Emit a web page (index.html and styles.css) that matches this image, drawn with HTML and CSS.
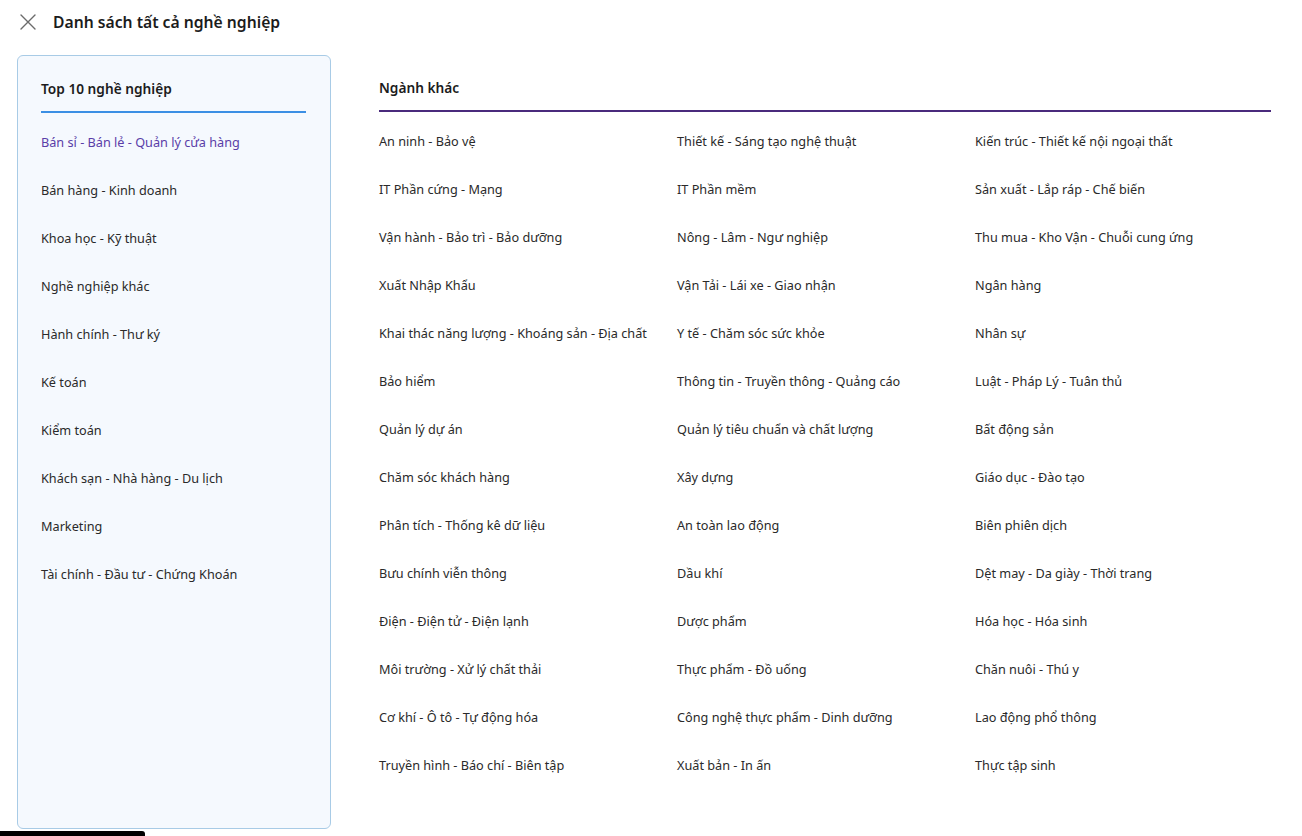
FILE: index.html
```html
<!DOCTYPE html>
<html lang="vi">
<head>
<meta charset="utf-8">
<title>Danh sách tất cả nghề nghiệp</title>
<link rel="stylesheet" href="styles.css">
</head>
<body>
<header class="topbar">
  <svg class="close-icon" width="18" height="18" viewBox="0 0 18 18" aria-hidden="true"><path d="M2 2 L16 16 M16 2 L2 16" stroke="#6b6b6b" stroke-width="1.4" fill="none" stroke-linecap="round"/></svg>
  <h1 class="title">Danh sách tất cả nghề nghiệp</h1>
</header>
<main class="layout">
  <aside class="sidebar">
    <h2 class="side-heading">Top 10 nghề nghiệp</h2>
    <ul class="side-list">
      <li class="side-item active">Bán sỉ - Bán lẻ - Quản lý cửa hàng</li>
      <li class="side-item">Bán hàng - Kinh doanh</li>
      <li class="side-item">Khoa học - Kỹ thuật</li>
      <li class="side-item">Nghề nghiệp khác</li>
      <li class="side-item">Hành chính - Thư ký</li>
      <li class="side-item">Kế toán</li>
      <li class="side-item">Kiểm toán</li>
      <li class="side-item">Khách sạn - Nhà hàng - Du lịch</li>
      <li class="side-item">Marketing</li>
      <li class="side-item">Tài chính - Đầu tư - Chứng Khoán</li>
    </ul>
  </aside>
  <section class="content">
    <h2 class="content-heading">Ngành khác</h2>
    <ul class="grid">
      <li>An ninh - Bảo vệ</li>
      <li>Thiết kế - Sáng tạo nghệ thuật</li>
      <li>Kiến trúc - Thiết kế nội ngoại thất</li>
      <li>IT Phần cứng - Mạng</li>
      <li>IT Phần mềm</li>
      <li>Sản xuất - Lắp ráp - Chế biến</li>
      <li>Vận hành - Bảo trì - Bảo dưỡng</li>
      <li>Nông - Lâm - Ngư nghiệp</li>
      <li>Thu mua - Kho Vận - Chuỗi cung ứng</li>
      <li>Xuất Nhập Khẩu</li>
      <li>Vận Tải - Lái xe - Giao nhận</li>
      <li>Ngân hàng</li>
      <li>Khai thác năng lượng - Khoáng sản - Địa chất</li>
      <li>Y tế - Chăm sóc sức khỏe</li>
      <li>Nhân sự</li>
      <li>Bảo hiểm</li>
      <li>Thông tin - Truyền thông - Quảng cáo</li>
      <li>Luật - Pháp Lý - Tuân thủ</li>
      <li>Quản lý dự án</li>
      <li>Quản lý tiêu chuẩn và chất lượng</li>
      <li>Bất động sản</li>
      <li>Chăm sóc khách hàng</li>
      <li>Xây dựng</li>
      <li>Giáo dục - Đào tạo</li>
      <li>Phân tích - Thống kê dữ liệu</li>
      <li>An toàn lao động</li>
      <li>Biên phiên dịch</li>
      <li>Bưu chính viễn thông</li>
      <li>Dầu khí</li>
      <li>Dệt may - Da giày - Thời trang</li>
      <li>Điện - Điện tử - Điện lạnh</li>
      <li>Dược phẩm</li>
      <li>Hóa học - Hóa sinh</li>
      <li>Môi trường - Xử lý chất thải</li>
      <li>Thực phẩm - Đồ uống</li>
      <li>Chăn nuôi - Thú y</li>
      <li>Cơ khí - Ô tô - Tự động hóa</li>
      <li>Công nghệ thực phẩm - Dinh dưỡng</li>
      <li>Lao động phổ thông</li>
      <li>Truyền hình - Báo chí - Biên tập</li>
      <li>Xuất bản - In ấn</li>
      <li>Thực tập sinh</li>
    </ul>
  </section>
</main>
<div class="bottom-bar"></div>
</body>
</html>
```

FILE: styles.css
```css
* { box-sizing: border-box; }
html, body { margin: 0; padding: 0; }
body {
  font-family: "Noto Sans", "Open Sans", sans-serif;
  color: #222;
  background: #fff;
  width: 1302px;
  height: 836px;
  overflow: hidden;
  position: relative;
}
ul { list-style: none; margin: 0; padding: 0; }
h1, h2 { margin: 0; }

.topbar {
  display: flex;
  align-items: center;
  height: 44px;
  padding-left: 19px;
  gap: 16px;
}
.close-icon { display: block; }
.title {
  font-size: 15.7px;
  font-weight: 600;
  color: #1c1c1c;
  line-height: 20px;
}

.layout {
  display: flex;
  padding: 11px 31px 0 17px;
  gap: 48px;
}

.sidebar {
  width: 314px;
  height: 774px;
  flex: none;
  background: #f5f9fe;
  border: 1px solid #a8cbe6;
  border-radius: 6px;
  padding: 23px 24px 0 23px;
}
.side-heading {
  font-size: 13.7px;
  font-weight: 600;
  line-height: 20px;
  color: #1c1c1c;
  padding-bottom: 12px;
  border-bottom: 2px solid #3b8fe4;
  margin-bottom: 5px;
}
.side-item {
  height: 48px;
  display: flex;
  align-items: center;
  font-size: 12.7px;
  color: #2a2a2a;
}
.side-item.active { color: #5a3ea8; }

.content {
  flex: 1;
  padding-top: 23px;
}
.content-heading {
  font-size: 13.7px;
  font-weight: 600;
  line-height: 20px;
  color: #1c1c1c;
  padding-bottom: 12px;
  border-bottom: 2px solid #4a2a7c;
  margin-bottom: 5px;
}
.grid {
  display: grid;
  grid-template-columns: 298px 298px 1fr;
  grid-auto-rows: 48px;
}
.grid li {
  display: flex;
  align-items: center;
  font-size: 12.7px;
  color: #2a2a2a;
  white-space: nowrap;
}

.bottom-bar {
  position: absolute;
  left: 0;
  bottom: 0;
  width: 145px;
  height: 5px;
  background: #000;
  border-top-right-radius: 3px;
}
```
